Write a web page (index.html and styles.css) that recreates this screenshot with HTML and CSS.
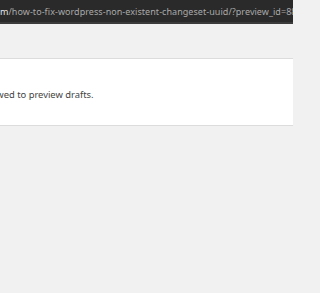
FILE: index.html
```html
<!DOCTYPE html>
<html>
<head>
<meta charset="utf-8">
<link rel="stylesheet" href="styles.css">
</head>
<body>
<div class="frame">
  <div class="toolbar">
    <div class="url"><span class="host">m</span>/how-to-fix-wordpress-non-existent-changeset-uuid/?preview_id=88</div>
  </div>
  <div class="page">
    <div class="card">
      <p class="msg">You are not allowed to preview drafts.</p>
    </div>
  </div>
</div>
</body>
</html>
```
FILE: styles.css
```css
html, body {
  margin: 0;
  padding: 0;
  background: #f1f1f1;
}
.frame {
  width: 293px;
  height: 293px;
  overflow: hidden;
  background: #f1f1f1;
}
.toolbar {
  height: 22px;
  background: #2a2a2a;
  border-bottom: 2px solid #3b3b3b;
  overflow: hidden;
}
.url {
  font-family: "Noto Sans", "Open Sans", sans-serif;
  font-size: 9px;
  letter-spacing: 0.05px;
  line-height: 22px;
  color: #a9a9a9;
  white-space: nowrap;
  padding-top: 1px;
}
.host {
  color: #e8e8e8;
}
.page {
  padding-top: 34px;
}
.card {
  margin-left: -72px;
  background: #ffffff;
  border-top: 1px solid #dcdcdc;
  border-bottom: 1px solid #dcdcdc;
  height: 66px;
  display: flex;
  align-items: center;
}
.msg {
  margin: 0;
  padding-top: 4px;
  font-family: "Noto Sans", "Open Sans", sans-serif;
  font-size: 9.4px;
  color: #444;
  white-space: nowrap;
}
```
